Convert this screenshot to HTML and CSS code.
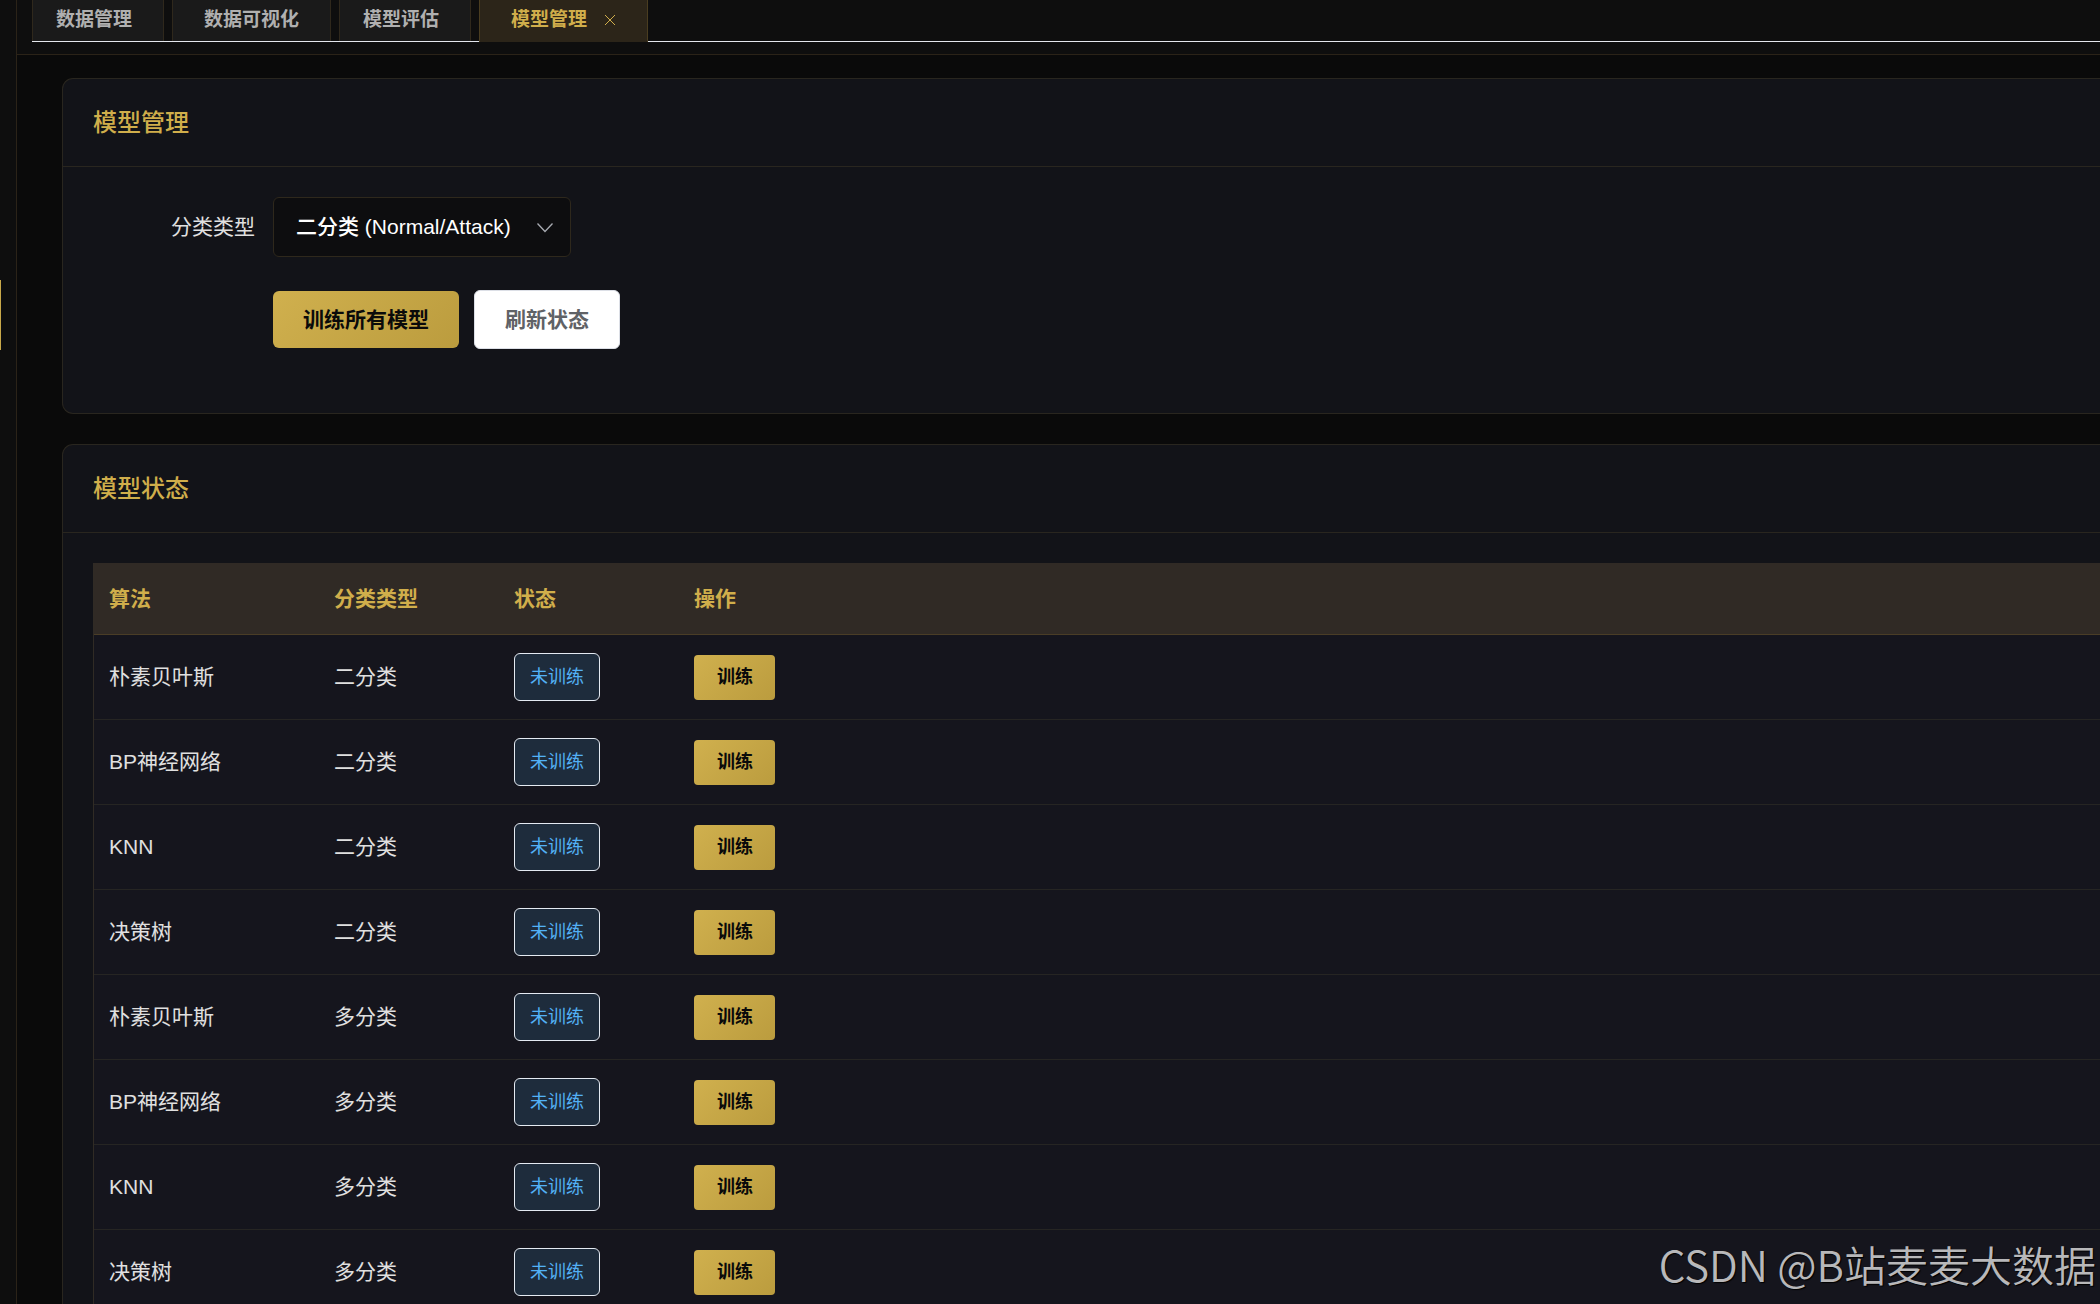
FILE: index.html
```html
<!DOCTYPE html>
<html lang="zh-CN">
<head>
    <meta charset="UTF-8">
    <title>模型管理</title>
    <link rel="stylesheet" href="styles.css">
</head>
<body>
    <div class="layout">
        <aside class="sidebar">
            <div class="menu-active"></div>
        </aside>
        <div class="main">
            <header class="header">
                <nav class="tabs">
                    <div class="tab"><button type="button">数据管理</button></div>
                    <div class="tab tab-wide"><button type="button">数据可视化</button></div>
                    <div class="tab"><button type="button">模型评估</button></div>
                    <div class="tab tab-wide active">
                        <button type="button">模型管理</button>
                        <button type="button" class="tab-close" aria-label="关闭">
                            <svg width="12" height="12" viewBox="0 0 12 12"><path d="M1 1L11 11M11 1L1 11" fill="none" stroke="currentColor"/></svg>
                        </button>
                    </div>
                </nav>
            </header>
            <main class="content">
                <section class="card">
                    <h2 class="card-header">模型管理</h2>
                    <form class="card-body form">
                        <div class="form-item">
                            <label for="class-type">分类类型</label>
                            <div class="select-box">
                                <select id="class-type">
                                    <option>二分类 (Normal/Attack)</option>
                                    <option>多分类</option>
                                </select>
                                <svg class="arrow" width="18" height="12" viewBox="0 0 18 12"><path d="M1.5 1.5L9 9.5L16.5 1.5" fill="none" stroke="currentColor" stroke-width="1.3"/></svg>
                            </div>
                        </div>
                        <div class="form-buttons">
                            <button type="button" class="btn btn-primary">训练所有模型</button>
                            <button type="button" class="btn btn-default">刷新状态</button>
                        </div>
                    </form>
                </section>

                <section class="card">
                    <h2 class="card-header">模型状态</h2>
                    <div class="card-body">
                        <table class="table">
                            <colgroup>
                                <col class="col-name">
                                <col class="col-type">
                                <col class="col-status">
                                <col>
                            </colgroup>
                            <thead>
                                <tr><th>算法</th><th>分类类型</th><th>状态</th><th>操作</th></tr>
                            </thead>
                            <tbody>
                                <tr>
                                    <td>朴素贝叶斯</td><td>二分类</td>
                                    <td><span class="tag">未训练</span></td>
                                    <td><button type="button" class="btn btn-primary btn-small">训练</button></td>
                                </tr>
                                <tr>
                                    <td>BP神经网络</td><td>二分类</td>
                                    <td><span class="tag">未训练</span></td>
                                    <td><button type="button" class="btn btn-primary btn-small">训练</button></td>
                                </tr>
                                <tr>
                                    <td>KNN</td><td>二分类</td>
                                    <td><span class="tag">未训练</span></td>
                                    <td><button type="button" class="btn btn-primary btn-small">训练</button></td>
                                </tr>
                                <tr>
                                    <td>决策树</td><td>二分类</td>
                                    <td><span class="tag">未训练</span></td>
                                    <td><button type="button" class="btn btn-primary btn-small">训练</button></td>
                                </tr>
                                <tr>
                                    <td>朴素贝叶斯</td><td>多分类</td>
                                    <td><span class="tag">未训练</span></td>
                                    <td><button type="button" class="btn btn-primary btn-small">训练</button></td>
                                </tr>
                                <tr>
                                    <td>BP神经网络</td><td>多分类</td>
                                    <td><span class="tag">未训练</span></td>
                                    <td><button type="button" class="btn btn-primary btn-small">训练</button></td>
                                </tr>
                                <tr>
                                    <td>KNN</td><td>多分类</td>
                                    <td><span class="tag">未训练</span></td>
                                    <td><button type="button" class="btn btn-primary btn-small">训练</button></td>
                                </tr>
                                <tr>
                                    <td>决策树</td><td>多分类</td>
                                    <td><span class="tag">未训练</span></td>
                                    <td><button type="button" class="btn btn-primary btn-small">训练</button></td>
                                </tr>
                            </tbody>
                        </table>
                    </div>
                </section>
            </main>
        </div>
    </div>
    <div class="watermark">CSDN @B站麦麦大数据</div>
</body>
</html>
```
FILE: styles.css
```css
* {
    box-sizing: border-box;
}
body {
    margin: 0;
    height: 100vh;
    overflow: hidden;
    position: relative;
    background-color: #0a0a0a;
    color: #e0e0e0;
    font-family: "Liberation Sans", "Noto Sans CJK SC", sans-serif;
    font-size: 21px;
    line-height: 32px;
}
button, select {
    font-family: inherit;
    cursor: pointer;
}
.layout {
    display: flex;
    height: 100%;
}
.sidebar {
    width: 17px;
    flex-shrink: 0;
    padding-top: 280px;
    background-color: #0e0e0e;
    border-right: 1px solid #2b2318;
}
.menu-active {
    width: 1px;
    height: 70px;
    background-color: #c9a94a;
}
.main {
    flex: 1;
    min-width: 0;
}

/* 标签页 */
.header {
    height: 55px;
    padding-left: 15px;
    background-color: #0e0e0e;
    border-bottom: 1px solid #2b2318;
}
.tabs {
    display: flex;
    gap: 8px;
    height: 42px;
    border-bottom: 1px solid #e4e7ed;
}
.tab {
    display: flex;
    height: 41px;
    padding: 0 31px 0 23px;
    background-color: #1a1a1a;
    border: 1px solid #2f281c;
    border-width: 0 1px;
    color: #b0b0b0;
}
.tab-wide {
    padding-left: 31px;
}
.tab.active {
    height: 42px;
    background-color: #2c2519;
    border-color: #4a3d20;
    color: #d0ae4b;
}
.tab button {
    padding: 0;
    border: none;
    background: none;
    color: inherit;
    font-size: 19px;
    font-weight: bold;
    line-height: 40px;
    height: 40px;
}
.tab .tab-close {
    display: flex;
    align-items: center;
    margin-left: 17px;
}

/* 卡片 */
.content {
    padding: 23px 0 0 45px;
}
.card {
    margin-bottom: 30px;
    background-color: #121318;
    border: 1px solid #29261f;
    border-right: none;
    border-radius: 11px 0 0 11px;
}
.card-header {
    margin: 0;
    padding: 0 30px;
    height: 88px;
    line-height: 87px;
    border-bottom: 1px solid #29261f;
    color: #d0ae4b;
    font-size: 24px;
    font-weight: 500;
}
.card-body {
    padding: 30px 0 30px 30px;
}

/* 表单 */
.form-item {
    display: flex;
    align-items: center;
    margin-bottom: 33px;
}
.form-item label {
    width: 180px;
    padding-right: 18px;
    text-align: right;
}
.select-box {
    position: relative;
}
.select-box select {
    display: block;
    appearance: none;
    width: 298px;
    height: 60px;
    padding: 0 22px 2px;
    background-color: #0d0d0f;
    border: 1px solid #2e281c;
    border-radius: 6px;
    color: #fff;
    font-size: 21px;
    font-weight: 500;
}
.arrow {
    position: absolute;
    right: 17px;
    top: 25px;
    color: #a8abb2;
    pointer-events: none;
}
.form-buttons {
    display: flex;
    align-items: center;
    gap: 15px;
    padding-left: 180px;
    margin-bottom: 34px;
}
.btn {
    height: 57px;
    padding: 0 30px;
    border: none;
    border-radius: 6px;
    font-size: 21px;
    font-weight: bold;
    line-height: 32px;
}
.btn-primary {
    background: linear-gradient(135deg, #d0b04e, #bb9c3e);
    color: #0a0a0a;
}
.btn-default {
    height: 59px;
    background-color: #fff;
    border: 1px solid #dcdfe6;
    color: #606266;
}
.btn-small {
    display: block;
    height: 45px;
    padding: 0 22px 0 23px;
    border-radius: 4px;
    font-size: 18px;
}

/* 表格 */
.table {
    width: 100%;
    table-layout: fixed;
    border-collapse: separate;
    border-spacing: 0;
    border-left: 1px solid #302b25;
    background-color: #15151d;
}
.col-name {
    width: 225px;
}
.col-type, .col-status {
    width: 180px;
}
.table th {
    height: 72px;
    padding: 0 15px;
    background-color: #302a25;
    border-bottom: 1px solid #4a3d26;
    color: #d0ae4b;
    text-align: left;
    font-weight: bold;
}
.table td {
    height: 85px;
    padding: 0 15px;
    border-bottom: 1px solid #262523;
}
.tag {
    display: block;
    width: 86px;
    height: 48px;
    line-height: 46px;
    background-color: #1e2c3c;
    border: 1px solid #e4eaf2;
    border-radius: 6px;
    color: #53b1f5;
    font-size: 18px;
    text-align: center;
}

.watermark {
    position: absolute;
    right: 4px;
    bottom: 10px;
    font-family: "Noto Sans CJK SC", sans-serif;
    font-size: 42px;
    font-weight: 350;
    line-height: 60px;
    color: #b8b8ba;
    text-shadow: 1px 1px 1px #000;
}
```
